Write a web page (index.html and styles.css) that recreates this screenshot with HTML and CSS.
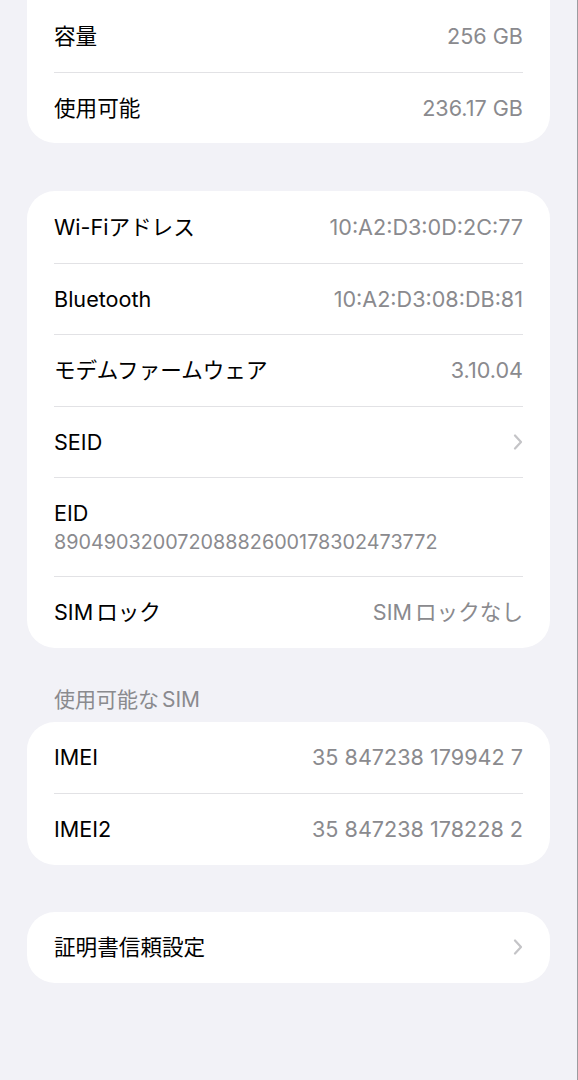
FILE: index.html
```html
<!doctype html>
<html>
<head>
<meta charset="utf-8">
<link rel="stylesheet" href="styles.css">
</head>
<body>
<div class="screen">
	<div class="group first">
		<div class="row">
			<span class="label">容量</span>
			<span class="value">256 GB</span>
		</div>
		<div class="row">
			<span class="label">使用可能</span>
			<span class="value">236.17 GB</span>
		</div>
	</div>

	<div class="group">
		<div class="row">
			<span class="label">Wi-Fiアドレス</span>
			<span class="value">10:A2:D3:0D:2C:77</span>
		</div>
		<div class="row">
			<span class="label">Bluetooth</span>
			<span class="value">10:A2:D3:08:DB:81</span>
		</div>
		<div class="row">
			<span class="label">モデムファームウェア</span>
			<span class="value">3.10.04</span>
		</div>
		<div class="row">
			<span class="label">SEID</span>
			<svg class="chevron" width="10" height="16" viewBox="0 0 10 16"><polyline points="2,1.5 8,8 2,14.5" fill="none" stroke="#c4c4c7" stroke-width="2.2" stroke-linecap="round" stroke-linejoin="round"/></svg>
		</div>
		<div class="row stacked">
			<span class="label">EID</span>
			<span class="sub">89049032007208882600178302473772</span>
		</div>
		<div class="row">
			<span class="label">SIM<span class="gap"></span>ロック</span>
			<span class="value">SIM<span class="gap"></span>ロックなし</span>
		</div>
	</div>

	<div class="header">使用可能な<span class="gap"></span>SIM</div>
	<div class="group after-header">
		<div class="row">
			<span class="label">IMEI</span>
			<span class="value">35 847238 179942 7</span>
		</div>
		<div class="row">
			<span class="label">IMEI2</span>
			<span class="value">35 847238 178228 2</span>
		</div>
	</div>

	<div class="group last">
		<div class="row">
			<span class="label">証明書信頼設定</span>
			<svg class="chevron" width="10" height="16" viewBox="0 0 10 16"><polyline points="2,1.5 8,8 2,14.5" fill="none" stroke="#c4c4c7" stroke-width="2.2" stroke-linecap="round" stroke-linejoin="round"/></svg>
		</div>
	</div>
</div>
</body>
</html>
```
FILE: styles.css
```css
html,body{
	margin:0;
	padding:0;
	background:#f2f2f7;
	font-family:"Inter","Noto Sans CJK JP",sans-serif;
}

.screen{
	width:577px;
	height:1080px;
	border-right:1px solid #9c9ca0;
	overflow:hidden;
}

.group{
	background:#fff;
	margin:48px 27px 0 27px;
	padding:0 27px;
	border-radius:28px;
}

.group.first{
	margin-top:-40px;
	padding-top:40px;
}

.group.after-header{
	margin-top:8px;
}

.group.last{
	margin-top:47px;
}

.row{
	display:flex;
	align-items:center;
	justify-content:space-between;
	height:71.5px;
	box-sizing:border-box;
	border-top:1px solid #e2e2e5;
}

.row:first-child{
	border-top:none;
}

.row.stacked{
	flex-direction:column;
	align-items:flex-start;
	justify-content:center;
	height:99px;
	gap:4px;
}

.label{
	font-size:21.6px;
	color:#000;
	line-height:26px;
}

.value{
	font-size:21.6px;
	color:#8a8a8e;
	line-height:26px;
}

.sub{
	font-size:19.8px;
	color:#8a8a8e;
	line-height:24px;
}

.gap{
	display:inline-block;
	width:3px;
}

.chevron{
	display:block;
}

.header{
	margin:38px 54px 0 54px;
	font-size:21px;
	line-height:28px;
	color:#8a8a8e;
}
```
